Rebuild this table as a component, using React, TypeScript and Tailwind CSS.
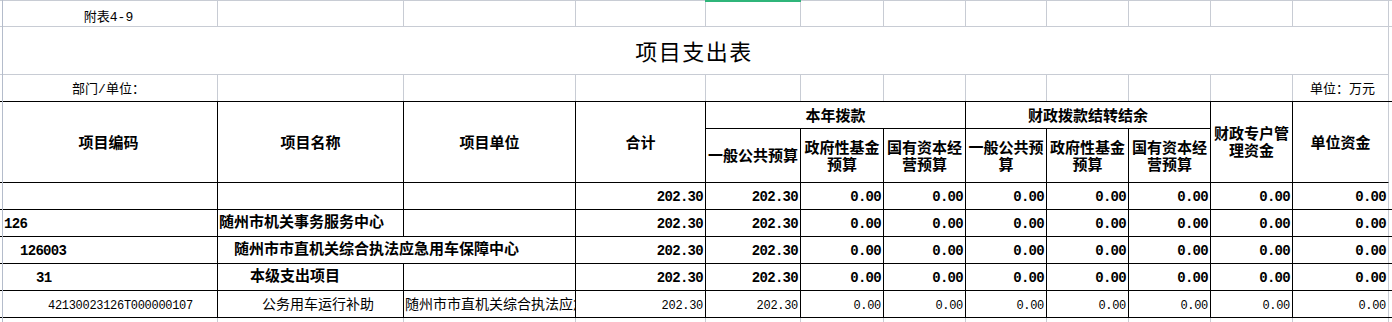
import React from 'react';

const cols =
  'grid grid-cols-[218px_186px_172px_130px_95px_83px_82px_81px_82px_82px_82px_96px]';

const grey = 'border-[#c8ccd4]';

type DataRow = {
  code: string;
  codePad: string;
  name: string;
  namePad: string;
  unit: string;
  wide?: boolean;
  bold: boolean;
  vals: string[];
};

const zeros = ['0.00', '0.00', '0.00', '0.00', '0.00', '0.00', '0.00'];

const rows: DataRow[] = [
  { code: '', codePad: '', name: '', namePad: '', unit: '', bold: true, vals: ['202.30', '202.30', ...zeros] },
  { code: '126', codePad: 'pl-[4px]', name: '随州市机关事务服务中心', namePad: 'pl-[1px]', unit: '', bold: true, vals: ['202.30', '202.30', ...zeros] },
  { code: '126003', codePad: 'pl-[20px]', name: '随州市市直机关综合执法应急用车保障中心', namePad: 'pl-[16px]', unit: '', wide: true, bold: true, vals: ['202.30', '202.30', ...zeros] },
  { code: '31', codePad: 'pl-[36px]', name: '本级支出项目', namePad: 'pl-[32px]', unit: '', bold: true, vals: ['202.30', '202.30', ...zeros] },
  { code: '42130023126T000000107', codePad: 'pl-[48px]', name: '公务用车运行补助', namePad: 'pl-[44px]', unit: '随州市市直机关综合执法应急用车保障中心', bold: false, vals: ['202.30', '202.30', ...zeros] },
];

const Row = ({ r }: { r: DataRow }) => {
  const cjk = r.bold ? 'text-[15px] font-bold' : 'text-[14px]';
  const num = r.bold ? 'text-[14px] font-bold tracking-[-0.7px]' : 'text-[12px] tracking-[-0.3px]';
  return (
    <div className={`${cols} h-[27px] border-b border-black`}>
      <div className={`flex items-center pt-[3px] border-r border-black ${r.codePad} ${num}`}>{r.code}</div>
      <div
        className={`flex items-center pt-[3px] whitespace-nowrap overflow-hidden border-r border-black ${r.namePad} ${cjk} ${r.wide ? 'col-span-2' : ''}`}
      >
        {r.name}
      </div>
      {!r.wide && (
        <div className={`flex items-center pt-[3px] whitespace-nowrap overflow-hidden border-r border-black pl-[1px] ${cjk}`}>
          {r.unit}
        </div>
      )}
      {r.vals.map((v, i) => (
        <div
          key={i}
          className={`flex items-center justify-end pt-[3px] pr-[2px] border-r ${i === r.vals.length - 1 ? grey : 'border-black'} ${num}`}
        >
          {v}
        </div>
      ))}
    </div>
  );
};

const headCell =
  'flex items-center justify-center pt-[4px] text-center border-r border-b border-black text-[15px] font-bold leading-[17px]';

export default function App() {
  return (
    <div className="relative w-[1392px] h-[322px] overflow-hidden bg-white text-black font-['Liberation_Mono','Noto_Sans_CJK_SC',monospace]">
      {/* top sheet rows */}
      <div className={`${cols} h-[27px] border-t border-b ${grey}`}>
        <div className={`flex items-end justify-center pb-[2px] leading-[13px] border-r ${grey} text-[13px]`}>附表4-9</div>
        {Array.from({ length: 11 }).map((_, i) => (
          <div key={i} className={`border-r ${grey}`} />
        ))}
      </div>
      <div className={`w-[1389px] h-[48px] flex items-center justify-center pt-[8px] border-b border-r ${grey}`}>
        <span className="text-[22px] tracking-[1.5px]">项目支出表</span>
      </div>
      <div className={`${cols} h-[26px]`}>
        <div className={`flex items-center justify-center pt-[3px] border-r ${grey} text-[13px]`}>部门/单位：</div>
        {Array.from({ length: 10 }).map((_, i) => (
          <div key={i} className={`border-r ${grey}`} />
        ))}
        <div className={`flex items-center justify-end pr-[13px] pt-[4px] border-r ${grey} text-[13px]`}>单位：万元</div>
      </div>

      {/* table header */}
      <div className={`${cols} grid-rows-[27px_54px] border-t border-black`}>
        <div className={`${headCell} row-span-2`}>项目编码</div>
        <div className={`${headCell} row-span-2`}>项目名称</div>
        <div className={`${headCell} row-span-2`}>项目单位</div>
        <div className={`${headCell} row-span-2`}>合计</div>
        <div className={`${headCell} col-span-3`}>本年拨款</div>
        <div className={`${headCell} col-span-3`}>财政拨款结转结余</div>
        <div className={`${headCell} row-span-2 px-[1px]`}>财政专户管理资金</div>
        <div className={`${headCell} row-span-2 border-r-[#c8ccd4]`}>单位资金</div>
        <div className={headCell}>一般公共预算</div>
        <div className={headCell}>政府性基金预算</div>
        <div className={headCell}>国有资本经营预算</div>
        <div className={headCell}>一般公共预算</div>
        <div className={headCell}>政府性基金预算</div>
        <div className={headCell}>国有资本经营预算</div>
      </div>

      {rows.map((r, i) => (
        <Row key={i} r={r} />
      ))}

      {/* empty sheet row below */}
      <div className={`${cols} h-[27px]`}>
        {Array.from({ length: 12 }).map((_, i) => (
          <div key={i} className={`border-r border-b ${grey}`} />
        ))}
      </div>

      {/* sheet frame line and selected column marker */}
      <div className="absolute left-[2px] top-0 bottom-0 w-px bg-[#b4bccb]" />
      <div className="absolute left-[705px] top-0 w-[96px] h-[2px] bg-[#2fb57a]" />
    </div>
  );
}
